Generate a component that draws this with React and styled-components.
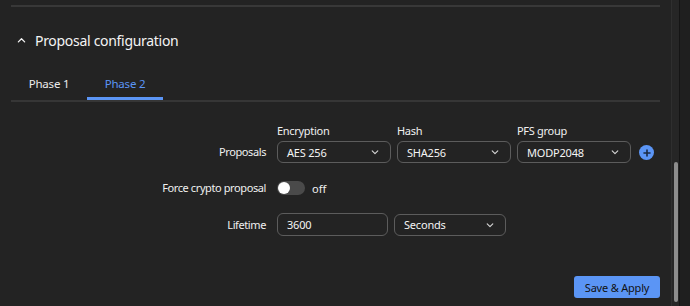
import styled, { createGlobalStyle } from 'styled-components'

const GlobalStyle = createGlobalStyle`
  html, body { margin: 0; padding: 0; background: #232323; }
  body { font-family: "Noto Sans", "Open Sans", sans-serif; color: #ececec; }
  * { box-sizing: border-box; }
`

const Screen = styled.div`
  display: flex;
  width: 690px;
  height: 306px;
  overflow: hidden;
  background: #232323;
`

const Content = styled.div`
  flex: 1;
  display: flex;
  flex-direction: column;
  padding: 0 11px 8px 11px;
`

const Divider = styled.div`
  margin-top: 5px;
  height: 2px;
  background: #383838;
`

const SectionHeader = styled.div`
  display: flex;
  align-items: center;
  gap: 9px;
  height: 20px;
  margin-top: 23px;
  padding-left: 6px;
  font-size: 14px;
  letter-spacing: -0.3px;
  color: #f4f4f4;
  & svg { width: 9px; height: 9px; }
`

const TabBar = styled.div`
  display: flex;
  margin-top: 14px;
  border-bottom: 2px solid #363636;
`

const Tab = styled.div`
  width: 76px;
  text-align: center;
  padding: 11px 0 4px;
  line-height: 18px;
  font-size: 11.5px;
  letter-spacing: -0.2px;
  color: ${(p) => (p.$active ? '#5b95f5' : '#ececec')};
  border-bottom: 3px solid ${(p) => (p.$active ? '#5b95f5' : 'transparent')};
`

const Form = styled.div`
  display: grid;
  grid-template-columns: 255px auto;
  column-gap: 11px;
  row-gap: 14px;
  margin-top: 21px;
  align-items: center;
`

const Label = styled.div`
  text-align: right;
  font-size: 11px;
  letter-spacing: -0.4px;
  color: #f0f0f0;
  align-self: ${(p) => (p.$bottom ? 'end' : 'center')};
  line-height: 22px;
`

const Fields = styled.div`
  display: flex;
  align-items: ${(p) => (p.$bottom ? 'flex-end' : 'center')};
  gap: 6px;
  min-height: 22px;
`

const FieldGroup = styled.div`
  display: flex;
  flex-direction: column;
  gap: 2px;
`

const Caption = styled.div`
  font-size: 11px;
  letter-spacing: -0.3px;
  line-height: 16px;
  color: #f0f0f0;
`

const Select = styled.div`
  display: flex;
  align-items: center;
  justify-content: space-between;
  width: ${(p) => p.$w || 114}px;
  height: 22px;
  padding: 0 11px 0 9px;
  border: 1px solid #5c5c5c;
  border-radius: 6px;
  font-size: 11px;
  letter-spacing: -0.2px;
  color: #f4f4f4;
  & svg { width: 8px; height: 8px; }
`

const Input = styled.div`
  display: flex;
  align-items: center;
  width: 111px;
  height: 23px;
  padding: 0 9px;
  border: 1px solid #5c5c5c;
  border-radius: 6px;
  font-size: 11px;
  letter-spacing: -0.2px;
  color: #f4f4f4;
`

const AddButton = styled.div`
  width: 15px;
  height: 15px;
  margin-left: 2px;
  margin-bottom: 3px;
  border-radius: 50%;
  background: #5b95f5;
  display: flex;
  align-items: center;
  justify-content: center;
  & svg { width: 10px; height: 10px; }
`

const Toggle = styled.div`
  width: 28px;
  height: 14px;
  border-radius: 7px;
  background: #4a4a4a;
  padding: 1px;
  display: flex;
  &::before {
    content: '';
    width: 12px;
    height: 12px;
    border-radius: 50%;
    background: #ffffff;
  }
`

const ToggleText = styled.span`
  margin-left: 1px;
  font-size: 11px;
  color: #f0f0f0;
`

const Footer = styled.div`
  margin-top: auto;
  display: flex;
  justify-content: flex-end;
`

const PrimaryButton = styled.div`
  width: 86px;
  height: 22px;
  border-radius: 3px;
  background: #5b95f5;
  color: #111;
  font-size: 11px;
  letter-spacing: -0.2px;
  display: flex;
  align-items: center;
  justify-content: center;
`

const ScrollGutter = styled.div`
  width: 9px;
  height: 100%;
  background: #262626;
  border-left: 1px solid #2f2f2f;
  border-right: 1px solid #151515;
  display: flex;
  flex-direction: column;
  justify-content: flex-end;
  align-items: center;
  padding-bottom: 4px;
`

const ScrollThumb = styled.div`
  width: 4px;
  height: 140px;
  border-radius: 2px;
  background: #8d8d8d;
`

const Edge = styled.div`
  width: 10px;
  height: 100%;
  background: #1f1f1f;
`

const Chevron = ({ up }) => (
  <svg viewBox="0 0 10 10" fill="none" stroke={up ? '#f4f4f4' : '#d6d6d6'} strokeWidth="1.4" strokeLinecap="round" strokeLinejoin="round">
    {up ? <path d="M1.5 6.5 5 3l3.5 3.5" /> : <path d="M1.5 3.5 5 7l3.5-3.5" />}
  </svg>
)

const Dropdown = ({ value, w }) => (
  <Select $w={w}>
    <span>{value}</span>
    <Chevron />
  </Select>
)

export default function App() {
  return (
    <>
      <GlobalStyle />
      <Screen>
        <Content>
          <Divider />
          <SectionHeader>
            <Chevron up />
            <span>Proposal configuration</span>
          </SectionHeader>
          <TabBar>
            <Tab>Phase 1</Tab>
            <Tab $active>Phase 2</Tab>
          </TabBar>
          <Form>
            <Label $bottom>Proposals</Label>
            <Fields $bottom>
              <FieldGroup>
                <Caption>Encryption</Caption>
                <Dropdown value="AES 256" />
              </FieldGroup>
              <FieldGroup>
                <Caption>Hash</Caption>
                <Dropdown value="SHA256" />
              </FieldGroup>
              <FieldGroup>
                <Caption>PFS group</Caption>
                <Dropdown value="MODP2048" />
              </FieldGroup>
              <AddButton>
                <svg viewBox="0 0 10 10" stroke="#1b2a44" strokeWidth="1.6" strokeLinecap="round">
                  <path d="M5 2v6M2 5h6" />
                </svg>
              </AddButton>
            </Fields>
            <Label>Force crypto proposal</Label>
            <Fields>
              <Toggle />
              <ToggleText>off</ToggleText>
            </Fields>
            <Label>Lifetime</Label>
            <Fields>
              <Input>3600</Input>
              <Dropdown value="Seconds" w={112} />
            </Fields>
          </Form>
          <Footer>
            <PrimaryButton>Save &amp; Apply</PrimaryButton>
          </Footer>
        </Content>
        <ScrollGutter>
          <ScrollThumb />
        </ScrollGutter>
        <Edge />
      </Screen>
    </>
  )
}
